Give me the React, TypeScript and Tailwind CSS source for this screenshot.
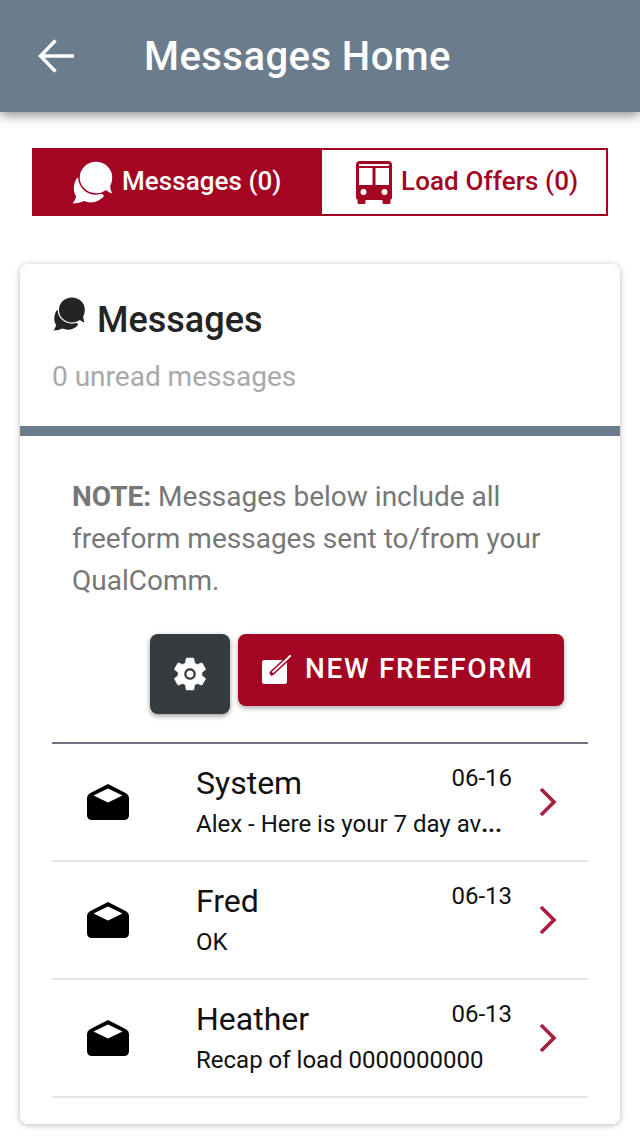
function Bubbles({ cut, className }: { cut: string; className: string }) {
  return (
    <svg viewBox="0 0 44 44" className={className} fill="currentColor">
      <path d="M6 18 C2 24 2 32 5 36 C5 39 3 42 1.5 43.5 C6 43.5 10 42.5 13 41 C20 44 28 42 33 36 L20 20 Z" />
      <path
        d="M25 1 C15.5 1 8 8.5 8 17.5 C8 26.5 15.5 34 25 34 C29 34 32 33 35 31 C37 33 40 34 43 34 C41 32 40 29 40 26 C41 24 42 21 42 17.5 C42 8.5 34.5 1 25 1 Z"
        stroke={cut}
        strokeWidth="1.5"
      />
    </svg>
  );
}

function Bus() {
  return (
    <svg viewBox="0 0 36 43" className="w-[36px] h-[43px] shrink-0">
      <path
        fill="#a30523"
        fillRule="evenodd"
        d="M4 0 H32 Q36 0 36 4 V37 Q36 38 34.5 38.5 V41.5 Q34.5 43 33 43 H28 Q26.5 43 26.5 41.5 V39 H9.5 V41.5 Q9.5 43 8 43 H3 Q1.5 43 1.5 41.5 V38.5 Q0 38 0 37 V4 Q0 0 4 0 Z M3 3 V5 H33 V3 Z M3 7 V24 H16.5 V7 Z M19.5 7 V24 H33 V7 Z M7.5 28 A3 3 0 1 0 7.5 34 A3 3 0 1 0 7.5 28 Z M28.5 28 A3 3 0 1 0 28.5 34 A3 3 0 1 0 28.5 28 Z"
      />
    </svg>
  );
}

function OpenEnvelope() {
  return (
    <svg viewBox="0 0 42 36" className="w-[42px] h-[36px]">
      <path
        fill="#000"
        fillRule="evenodd"
        d="M21 0 L39.5 9.5 Q42 11 42 14 V31 Q42 36 37 36 H5 Q0 36 0 31 V14 Q0 11 2.5 9.5 Z M21 4.5 L6.5 11.5 L21 18.5 L35.5 11.5 Z"
      />
    </svg>
  );
}

function Gear() {
  return (
    <svg viewBox="0 0 24 24" className="w-[40px] h-[40px]" fill="#fff">
      <path
        stroke="#fff"
        strokeWidth="0.3"
        strokeLinejoin="round"
        d="M19.14 12.94c.04-.3.06-.61.06-.94 0-.32-.02-.64-.07-.94l2.03-1.58c.18-.14.23-.41.12-.61l-1.92-3.32c-.12-.22-.37-.29-.59-.22l-2.39.96c-.5-.38-1.03-.7-1.62-.94l-.36-2.54c-.04-.24-.24-.41-.48-.41h-3.84c-.24 0-.43.17-.47.41l-.36 2.54c-.59.24-1.13.57-1.62.94l-2.39-.96c-.22-.08-.47 0-.59.22L2.74 8.87c-.12.21-.08.47.12.61l2.03 1.58c-.05.3-.09.63-.09.94s.02.64.07.94l-2.03 1.58c-.18.14-.23.41-.12.61l1.92 3.32c.12.22.37.29.59.22l2.39-.96c.5.38 1.03.7 1.62.94l.36 2.54c.05.24.24.41.48.41h3.84c.24 0 .44-.17.47-.41l.36-2.54c.59-.24 1.13-.56 1.62-.94l2.39.96c.22.08.47 0 .59-.22l1.92-3.32c.12-.22.07-.47-.12-.61l-2.01-1.58zM12 15.6c-1.98 0-3.6-1.62-3.6-3.6s1.62-3.6 3.6-3.6 3.6 1.62 3.6 3.6-1.62 3.6-3.6 3.6z"
      />
      <circle cx="12" cy="12" r="2.1" />
    </svg>
  );
}

function Row({ name, date, text, more }: { name: string; date: string; text: string; more?: boolean }) {
  return (
    <div className="flex h-[118px] border-b-2 border-[#e3e3e3] items-stretch">
      <div className="w-[144px] pl-[35px] pt-[40px] shrink-0">
        <OpenEnvelope />
      </div>
      <div className="w-[316px] shrink-0 pt-[19px]">
        <div className="flex justify-between">
          <span className="text-[32px] leading-[40px] text-[#111]">{name}</span>
          <span className="text-[24px] leading-[28px] mt-[1px] text-[#111]">{date}</span>
        </div>
        <div className="text-[24px] leading-[32px] mt-[5px] text-[#111] whitespace-nowrap">
          {text}
          {more && <span className="font-bold">...</span>}
        </div>
      </div>
      <div className="pl-[27px] pt-[43px]">
        <svg viewBox="0 0 18 30" className="w-[18px] h-[30px]" fill="none" stroke="#a8203f" strokeWidth="3.6">
          <path d="M2 2 L15 15 L2 28" />
        </svg>
      </div>
    </div>
  );
}

export default function App() {
  return (
    <div className="w-[640px] h-[1136px] bg-white overflow-hidden font-['Roboto',sans-serif]">
      <header className="h-[112px] bg-[#6b7c8c] flex items-center shadow-[0_4px_10px_rgba(0,0,0,0.4)] relative">
        <svg viewBox="0 0 36 34" className="w-[36px] h-[34px] ml-[38px] shrink-0" fill="none" stroke="#fff" strokeWidth="3.4">
          <path d="M17.5 1.5 L2.5 17 L17.5 32.5 M2.5 17 H36" />
        </svg>
        <h1 className="ml-[70px] mt-[2px] text-[40px] tracking-[0.45px] leading-[44px] font-medium text-white">Messages Home</h1>
      </header>

      <div className="mx-[32px] mt-[36px] h-[68px] flex border-2 border-[#a30523]">
        <div className="w-[288px] bg-[#a30523] flex items-center pl-[37px] text-white text-[26px] leading-[32px] font-medium gap-[7px]">
          <Bubbles cut="#a30523" className="w-[44px] h-[44px] text-white shrink-0" />
          <span className="-mt-[2px] tracking-[0.05px]">Messages (0)</span>
        </div>
        <div className="flex-1 bg-white flex items-center pl-[34px] text-[#a30523] text-[26px] leading-[32px] font-medium gap-[9px]">
          <Bus />
          <span className="-mt-[2px] tracking-[0.1px]">Load Offers (0)</span>
        </div>
      </div>

      <main className="mx-[20px] mt-[48px] h-[860px] rounded-[8px] bg-white shadow-[0_1px_6px_rgba(0,0,0,0.28)] overflow-hidden">
        <section className="h-[172px] border-b-[10px] border-[#6b7c8c] px-[32px] pt-[32px]">
          <div className="flex items-start gap-[10px] h-[50px] text-[#242424]">
            <Bubbles cut="#fff" className="w-[35px] h-[35px] text-[#242424]" />
            <span className="text-[36px] leading-[48px] font-medium">Messages</span>
          </div>
          <p className="mt-[11px] text-[28px] leading-[40px] text-[#a9a9a9]">0 unread messages</p>
        </section>

        <p className="mx-[52px] mt-[40px] text-[28px] leading-[42px] text-[#777]">
          <b className="font-bold">NOTE:</b> Messages below include all freeform messages sent to/from your QualComm.
        </p>

        <div className="flex items-start mt-[32px] ml-[130px] gap-[8px]">
          <button className="w-[80px] h-[80px] rounded-[8px] bg-[#363b3f] flex items-center justify-center shadow-[0_2px_5px_rgba(0,0,0,0.4)]">
            <Gear />
          </button>
          <button className="w-[326px] h-[72px] rounded-[8px] bg-[#a30523] flex items-center pl-[23px] gap-[14px] text-white text-[28px] leading-[34px] font-medium tracking-[1.65px] shadow-[0_2px_5px_rgba(0,0,0,0.35)]">
            <svg viewBox="0 0 30 30" className="w-[30px] h-[30px] shrink-0">
              <rect x="1" y="5" width="25" height="24" rx="2.5" fill="#fff" />
              <path d="M11 18 L24 6" stroke="#a30523" strokeWidth="5" strokeLinecap="round" fill="none" />
              <path d="M11.5 17.5 L25 5" stroke="#fff" strokeWidth="1.8" fill="none" />
              <path d="M25 5 L29 1" stroke="#fff" strokeWidth="2" strokeLinecap="round" fill="none" />
            </svg>
            <span className="-mt-[2px]">NEW FREEFORM</span>
          </button>
        </div>

        <div className="mx-[32px] mt-[28px] border-t-2 border-[#6c757d]">
          <Row name="System" date="06-16" text="Alex - Here is your 7 day av" more />
          <Row name="Fred" date="06-13" text="OK" />
          <Row name="Heather" date="06-13" text="Recap of load 0000000000" />
        </div>
      </main>
    </div>
  );
}
